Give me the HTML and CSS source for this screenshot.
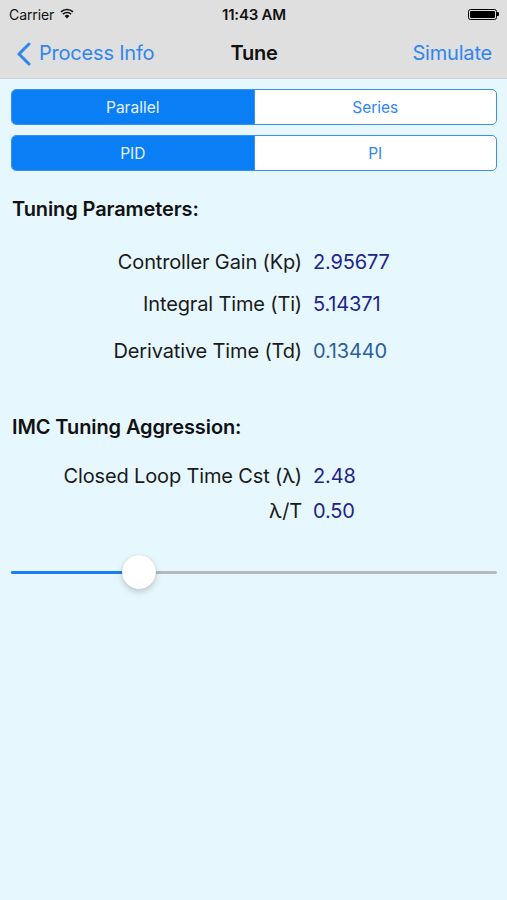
FILE: index.html
```html
<!DOCTYPE html>
<html>
<head>
<meta charset="utf-8">
<link rel="stylesheet" href="styles.css">
</head>
<body>
<div class="screen">
  <header class="top">
    <div class="status">
      <div class="status-left">
        <span class="carrier">Carrier</span>
        <svg class="wifi" width="14" height="11" viewBox="0 0 14 11">
          <path d="M7 10.5 L4.6 7.9 A3.4 3.4 0 0 1 9.4 7.9 Z" fill="#111"/>
          <path d="M2.9 6.1 A5.9 5.9 0 0 1 11.1 6.1" fill="none" stroke="#111" stroke-width="1.6"/>
          <path d="M1 3.9 A8.6 8.6 0 0 1 13 3.9" fill="none" stroke="#111" stroke-width="1.6"/>
        </svg>
      </div>
      <span class="time">11:43 AM</span>
      <div class="status-right">
        <span class="battery"><span class="battery-fill"></span></span><span class="battery-tip"></span>
      </div>
    </div>
    <nav class="navbar">
      <a class="back">
        <svg class="chevron" width="16" height="24" viewBox="0 0 16 24">
          <path d="M13 2 L3 12 L13 22" fill="none" stroke="#2f86ef" stroke-width="3" stroke-linecap="round" stroke-linejoin="round"/>
        </svg>
        <span>Process Info</span>
      </a>
      <span class="title">Tune</span>
      <a class="action">Simulate</a>
    </nav>
  </header>

  <main class="content">
    <div class="segmented">
      <span class="seg active">Parallel</span>
      <span class="seg">Series</span>
    </div>
    <div class="segmented">
      <span class="seg active">PID</span>
      <span class="seg">PI</span>
    </div>

    <h2 class="section-title first">Tuning Parameters:</h2>
    <div class="params">
      <div class="row"><span class="label">Controller Gain (Kp)</span><span class="value">2.95677</span></div>
      <div class="row"><span class="label">Integral Time (Ti)</span><span class="value">5.14371</span></div>
      <div class="row spaced"><span class="label">Derivative Time (Td)</span><span class="value alt">0.13440</span></div>
    </div>

    <h2 class="section-title second">IMC Tuning Aggression:</h2>
    <div class="params tight">
      <div class="row"><span class="label">Closed Loop Time Cst (λ)</span><span class="value">2.48</span></div>
      <div class="row"><span class="label">λ/T</span><span class="value">0.50</span></div>
    </div>

    <div class="slider">
      <div class="track"><div class="track-fill" style="width: 26.4%"></div></div>
      <div class="thumb" style="left: 26.4%"></div>
    </div>
  </main>
</div>
</body>
</html>
```

FILE: styles.css
```css
* { box-sizing: border-box; }
html, body {
  margin: 0;
  padding: 0;
  height: 100%;
}
body {
  background: #e6f7fe;
  font-family: Inter, "Liberation Sans", Arial, sans-serif;
  color: #111;
}
.screen {
  width: 507px;
  min-height: 900px;
  background: #e6f7fe;
}
.top {
  background: #dfdfdf;
  border-bottom: 1px solid #c9d3d8;
}
.status {
  height: 28px;
  display: grid;
  grid-template-columns: 1fr auto 1fr;
  align-items: center;
  padding: 0 8px 0 9px;
}
.status-left {
  display: flex;
  align-items: center;
  gap: 6px;
}
.carrier {
  font-size: 14px;
  letter-spacing: -0.1px;
}
.wifi { margin-top: -2px; }
.time {
  font-size: 15px;
  font-weight: 600;
  letter-spacing: -0.2px;
}
.status-right {
  display: flex;
  justify-content: flex-end;
  align-items: center;
}
.battery {
  width: 29px;
  height: 11px;
  border: 1px solid #000;
  border-radius: 2.5px;
  padding: 1px;
  display: flex;
}
.battery-fill {
  flex: 1;
  background: #000;
  border-radius: 1px;
}
.battery-tip {
  width: 2px;
  height: 4px;
  background: #000;
  border-radius: 0 1px 1px 0;
}
.navbar {
  height: 50px;
  display: grid;
  grid-template-columns: 1fr auto 1fr;
  align-items: center;
  padding: 0 15px 0 16px;
}
.back {
  display: flex;
  align-items: center;
  gap: 7px;
  color: #2f86ef;
  font-size: 20px;
  letter-spacing: -0.2px;
}
.chevron { margin-top: 1px; }
.title {
  font-size: 20px;
  font-weight: 600;
  letter-spacing: -0.2px;
}
.action {
  justify-self: end;
  color: #2f86ef;
  font-size: 20px;
  letter-spacing: -0.2px;
}
.content {
  padding: 10px 10px 0 11px;
}
.segmented {
  display: flex;
  height: 36px;
  border: 1.5px solid #3b8ff0;
  border-radius: 5px;
  overflow: hidden;
  background: #ffffff;
  margin-bottom: 10px;
}
.seg {
  flex: 1;
  display: flex;
  align-items: center;
  justify-content: center;
  font-size: 15.5px;
  color: #2f86ef;
}
.seg + .seg { border-left: 1px solid #3b8ff0; }
.seg.active {
  background: #0a7ff5;
  color: #e8f2ff;
}
.section-title {
  margin: 0;
  font-size: 20px;
  line-height: 24px;
  font-weight: 600;
  letter-spacing: -0.1px;
  padding-left: 1px;
}
.section-title.first { margin-top: 26px; }
.section-title.second { margin-top: 52px; }
.params {
  display: flex;
  flex-direction: column;
  gap: 19px;
  margin-top: 30px;
}
.row.spaced { margin-top: 5px; }
.params.tight {
  gap: 12px;
  margin-top: 26px;
}
.row {
  display: grid;
  grid-template-columns: 291px auto;
  column-gap: 11px;
  align-items: center;
  font-size: 20px;
  line-height: 23px;
  letter-spacing: -0.15px;
}
.label {
  text-align: right;
  color: #1a1a1a;
}
.value { color: #23238c; }
.value.alt { color: #2c5e9e; }
.slider {
  position: relative;
  height: 36px;
  margin-top: 31px;
}
.track {
  position: absolute;
  left: 0;
  right: 0;
  top: 17px;
  height: 2.5px;
  background: #b7b9bb;
  border-radius: 2px;
}
.track-fill {
  height: 100%;
  background: #1a7ff5;
  border-radius: 2px;
}
.thumb {
  position: absolute;
  top: 1px;
  width: 34px;
  height: 34px;
  margin-left: -17px;
  border-radius: 50%;
  background: #fff;
  box-shadow: 0 3px 6px rgba(0,0,0,0.18), 0 0 1px rgba(0,0,0,0.2);
}
```
